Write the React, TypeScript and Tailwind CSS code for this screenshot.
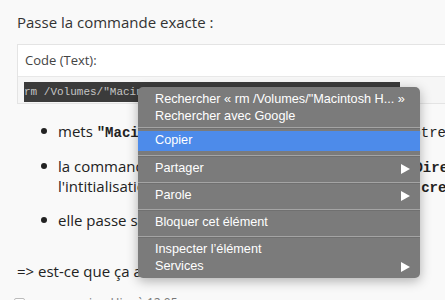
import React from "react";

const Arrow = () => (
  <svg width="9" height="10" viewBox="0 0 9 10" className="shrink-0">
    <polygon points="0,0 9,5 0,10" fill="#ffffff" />
  </svg>
);

const Sep = ({ h }: { h: number }) => (
  <div className={h === 6 ? "h-[6px] flex flex-col justify-center" : "h-[9px] flex flex-col justify-center"}>
    <div className="h-[1px] bg-[#a4a4a4]" />
    <div className="h-[1px] bg-[#707070]" />
  </div>
);

const Item = ({ label, arrow, h = "h-[18px]" }: { label: string; arrow?: boolean; h?: string }) => (
  <div className={`${h} flex items-center pl-[17px] pr-[10px] justify-between`}>
    <span className="whitespace-nowrap">{label}</span>
    {arrow ? <Arrow /> : null}
  </div>
);

export default function App() {
  const code = "font-['Liberation_Mono',monospace] text-[14px] leading-none";
  return (
    <div className="relative w-[445px] h-[300px] overflow-hidden bg-[#f9f9f9] font-['Open_Sans',sans-serif] text-[#333]">
      <p className="pt-[11px] pl-[17px] text-[15px] leading-[22px] whitespace-nowrap">Passe la commande exacte :</p>

      <div className="mt-[11px] ml-[17px] w-[450px] border border-[#e4e4e4] bg-white">
        <div className="h-[31px] flex items-center pl-[7px] text-[13px] text-[#444]">Code (Text):</div>
        <div className="h-[27px] bg-[#f6f6f6] border-t border-[#e8e8e8] pl-[6px]">
          <span className="font-['Liberation_Mono',monospace] inline-block bg-[#3b3b3b] text-[#c4c4c4] text-[11px] leading-[20px] whitespace-pre">
            rm /Volumes/"Macintosh HD"/var/db/caches/opendirectory/*{" "}
          </span>
        </div>
      </div>

      <div className="mt-[17px] flex flex-col text-[15px] leading-[20px] text-[#222]">
        <div className="flex pl-[41px]">
          <span className="mt-[7px] w-[6px] h-[6px] rounded-full bg-[#222] shrink-0" />
          <span className="ml-[11px] whitespace-nowrap">
            mets <b className={code}>"Macintosh HD"</b> si c'est bien le nom de ton{" "}
            <span className={code}>votre </span>
            <b className={code}>HD</b>
          </span>
        </div>
        <div className="flex pl-[41px] mt-[15px]">
          <span className="mt-[7px] w-[6px] h-[6px] rounded-full bg-[#222] shrink-0" />
          <span className="ml-[11px] flex flex-col whitespace-nowrap">
            <span>
              la commande supprime tous les fichiers de cache <b className={code}>/Directory</b>
            </span>
            <span>
              l'intitialisation du cache se fera au redémarrage par <b className={code}>create</b>
            </span>
          </span>
        </div>
        <div className="flex pl-[41px] mt-[14px]">
          <span className="mt-[7px] w-[6px] h-[6px] rounded-full bg-[#222] shrink-0" />
          <span className="ml-[11px] whitespace-nowrap">elle passe sans erreur</span>
        </div>
        <p className="mt-[31px] pl-[17px] whitespace-nowrap">=&gt; est-ce que ça a été fait ?</p>
      </div>

      <div className="mt-[14px] pl-[14px] flex items-center gap-[8px] text-[12px] leading-[16px] text-[#777]">
        <span className="w-[11px] h-[11px] border border-[#bbb] rounded-[2px] bg-white" />
        <span>macomaniac, Hier à 12:05</span>
      </div>

      <div className="absolute left-[138px] top-[87px] w-[282px] h-[191px] rounded-[5px] bg-[#7b7b7b] shadow-[0_3px_12px_rgba(0,0,0,0.3)] font-['Liberation_Sans',Arial,sans-serif] text-[12.7px] text-white pt-[4px] overflow-hidden">
        <Item label={'Rechercher « rm /Volumes/"Macintosh H... »'} h="h-[17px]" />
        <Item label="Rechercher avec Google" h="h-[17px]" />
        <Sep h={6} />
        <div className="h-[20px] flex items-center pl-[17px] bg-[#4d8bea]">Copier</div>
        <Sep h={9} />
        <Item label="Partager" arrow />
        <Sep h={9} />
        <Item label="Parole" arrow />
        <Sep h={9} />
        <Item label="Bloquer cet élément" />
        <Sep h={9} />
        <Item label="Inspecter l’élément" h="h-[17px]" />
        <Item label="Services" arrow h="h-[17px]" />
      </div>
    </div>
  );
}
